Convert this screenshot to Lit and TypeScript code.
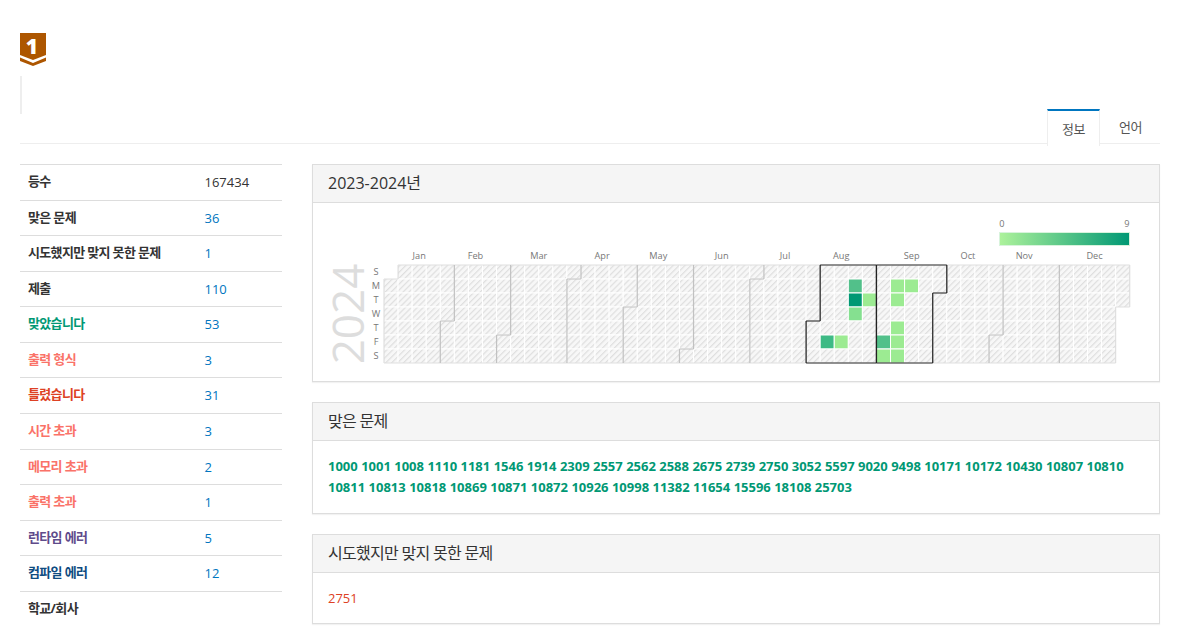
import { LitElement, html, css, svg } from "lit";
import { customElement } from "lit/decorators.js";

const stats: [string, string, string][] = [
  ["등수", "167434", ""],
  ["맞은 문제", "36", "link"],
  ["시도했지만 맞지 못한 문제", "1", "link"],
  ["제출", "110", "link"],
  ["맞았습니다", "53", "ac"],
  ["출력 형식", "3", "pe"],
  ["틀렸습니다", "31", "wa"],
  ["시간 초과", "3", "pe"],
  ["메모리 초과", "2", "pe"],
  ["출력 초과", "1", "pe"],
  ["런타임 에러", "5", "rte"],
  ["컴파일 에러", "12", "ce"],
  ["학교/회사", "", ""],
];

const solved = [
  1000, 1001, 1008, 1110, 1181, 1546, 1914, 2309, 2557, 2562, 2588, 2675, 2739, 2750, 3052, 5597,
  9020, 9498, 10171, 10172, 10430, 10807, 10810, 10811, 10813, 10818, 10869, 10871, 10872, 10926,
  10998, 11382, 11654, 15596, 18108, 25703,
];

const monthNames = ["Jan", "Feb", "Mar", "Apr", "May", "Jun", "Jul", "Aug", "Sep", "Oct", "Nov", "Dec"];
const monthDays = [31, 29, 31, 30, 31, 30, 31, 31, 30, 31, 30, 31];
const dayNames = ["S", "M", "T", "W", "T", "F", "S"];

const CW = 14.07;
const CH = 14;
const GX = 71;
const GY = 62;

// "col,row" -> colour, read off the reference
const active: Record<string, string> = {
  "33,1": "#52c08a",
  "33,2": "#009874",
  "34,2": "#9ceb92",
  "33,3": "#85e090",
  "31,5": "#3dba85",
  "32,5": "#9ceb92",
  "36,1": "#9ceb92",
  "37,1": "#9ceb92",
  "36,2": "#9ceb92",
  "36,4": "#9ceb92",
  "35,5": "#52c08a",
  "36,5": "#9ceb92",
  "35,6": "#9ceb92",
  "36,6": "#9ceb92",
};

function buildMonths() {
  const owner = new Map<string, number>();
  const cells: { col: number; row: number; month: number }[] = [];
  let idx = 1; // 2024-01-01 is a Monday
  monthDays.forEach((n, month) => {
    for (let d = 0; d < n; d++, idx++) {
      const col = Math.floor(idx / 7);
      const row = idx % 7;
      cells.push({ col, row, month });
      owner.set(`${col},${row}`, month);
    }
  });
  const outlines = monthNames.map((_, m) => {
    let d = "";
    cells
      .filter((c) => c.month === m)
      .forEach(({ col, row }) => {
        const x0 = GX + col * CW;
        const x1 = x0 + CW;
        const y0 = GY + row * CH;
        const y1 = y0 + CH;
        if (owner.get(`${col},${row - 1}`) !== m) d += `M${x0} ${y0}H${x1}`;
        if (owner.get(`${col},${row + 1}`) !== m) d += `M${x0} ${y1}H${x1}`;
        if (owner.get(`${col - 1},${row}`) !== m) d += `M${x0} ${y0}V${y1}`;
        if (owner.get(`${col + 1},${row}`) !== m) d += `M${x1} ${y0}V${y1}`;
      });
    return d;
  });
  const centers = monthNames.map((_, m) => {
    const cols = cells.filter((c) => c.month === m).map((c) => c.col);
    return GX + ((Math.min(...cols) + Math.max(...cols) + 1) / 2) * CW;
  });
  return { cells, outlines, centers };
}

const { cells, outlines, centers } = buildMonths();

@customElement("app-root")
export class AppRoot extends LitElement {
  static styles = css`
    :host {
      display: block;
      height: 633px;
      overflow: hidden;
      background: #fff;
      color: #333;
      font-family: "Open Sans", "Noto Sans CJK KR", sans-serif;
      font-size: 13px;
      line-height: 18.57px;
    }
    .page {
      width: 1140px;
      padding: 33px 18px 0 20px;
    }
    .badge {
      display: block;
    }
    .badge text {
      font: 800 21px "Open Sans", sans-serif;
      fill: #fff;
    }
    .quote {
      width: 0;
      height: 38px;
      margin-top: 10px;
      border-left: 2px solid #eee;
    }
    .tabs {
      display: flex;
      justify-content: flex-end;
      height: 34px;
      margin: -5px 0 20px;
      border-bottom: 1px solid #eee;
      letter-spacing: -0.5px;
    }
    .tab {
      width: 59px;
      height: 34px;
      text-align: center;
      line-height: 36px;
      color: #555;
    }
    .tab.on {
      width: 51px;
      height: 35px;
      margin-right: 1px;
      background: #fff;
      border: 1px solid #eee;
      border-top: 2px solid #0076c0;
      border-bottom: 0;
    }
    .cols {
      display: grid;
      grid-template-columns: 262px 848px;
      gap: 30px;
    }
    .row {
      display: grid;
      grid-template-columns: 176.5px 1fr;
      padding: 8px;
      border-top: 1px solid #ddd;
    }
    .row b {
      margin-top: -1px;
      font-weight: 700;
      letter-spacing: -0.65px;
    }
    .row.ac b {
      color: #009874;
    }
    .row.pe b {
      color: #fa7268;
    }
    .row.wa b {
      color: #dd4124;
    }
    .row.rte b {
      color: #5f4b8b;
    }
    .row.ce b {
      color: #0f4c81;
    }
    .row.link span,
    .row.ac span,
    .row.pe span,
    .row.wa span,
    .row.rte span,
    .row.ce span {
      color: #0076c0;
    }
    .panel {
      border: 1px solid #ddd;
      margin-bottom: 20px;
      box-shadow: 0 1px 1px rgba(0, 0, 0, 0.05);
    }
    .panel h3 {
      margin: 0;
      padding: 9px 15px;
      background: #f5f5f5;
      border-bottom: 1px solid #ddd;
      font-size: 16px;
      font-weight: 400;
      line-height: 19px;
      color: #333;
    }
    .panel h3.ko {
      letter-spacing: -0.7px;
    }
    .body {
      padding: 15px;
      line-height: 21px;
    }
    .solved a {
      color: #009874;
      font-weight: 700;
    }
    .failed {
      padding-bottom: 14px;
    }
    .failed a {
      color: #dd4124;
    }
    .chart {
      display: block;
    }
    .chart text {
      font-family: "Open Sans", sans-serif;
      font-size: 9.2px;
      fill: #777;
      text-anchor: middle;
    }
    .chart text.year {
      font-size: 44px;
      fill: #ddd;
    }
  `;

  private chart() {
    return html`<svg class="chart" width="846" height="178" viewBox="0 0 846 178">
      <defs>
        <pattern id="hatch" width="4.2" height="4.2" patternUnits="userSpaceOnUse" patternTransform="rotate(45)">
          <rect width="4.2" height="4.2" fill="#f7f7f7"></rect>
          <rect width="1.2" height="4.2" fill="#dfdfdf"></rect>
        </pattern>
        <linearGradient id="legend">
          <stop offset="0" stop-color="#adf29b"></stop>
          <stop offset="1" stop-color="#009874"></stop>
        </linearGradient>
      </defs>
      <text x="689" y="24">0</text>
      <text x="814" y="24">9</text>
      <rect x="686.5" y="29.5" width="130" height="13" fill="url(#legend)" stroke="#d8f3dc"></rect>
      ${monthNames.map((m, i) => svg`<text x=${centers[i]} y="56">${m}</text>`)}
      ${dayNames.map((d, i) => svg`<text x="63" y=${GY + i * CH + 10}>${d}</text>`)}
      <text class="year" transform="translate(51 111) rotate(-90)">2024</text>
      ${cells.map(
        ({ col, row }) => svg`<rect
          x=${GX + col * CW}
          y=${GY + row * CH}
          width=${CW}
          height=${CH}
          fill=${active[`${col},${row}`] ?? "url(#hatch)"}
          stroke="#fff"
        ></rect>`,
      )}
      ${outlines.map((d, m) =>
        m === 7 || m === 8
          ? ""
          : svg`<path d=${d} fill="none" stroke="#000" stroke-opacity="0.13" stroke-width="1.2"></path>`,
      )}
      <path d=${outlines[7]} fill="none" stroke="#222" stroke-width="1.2"></path>
      <path d=${outlines[8]} fill="none" stroke="#222" stroke-width="1.2"></path>
    </svg>`;
  }

  render() {
    return html`<div class="page">
      <svg class="badge" width="26" height="33" viewBox="0 0 26 33">
        <path d="M0 0H26V22L13 27L0 22Z" fill="#ad5600"></path>
        <path d="M0 24.500L13 30L26 24.500V28L13 33L0 28Z" fill="#ad5600"></path>
        <text x="12" y="20.500" text-anchor="middle">1</text>
      </svg>
      <div class="quote"></div>
      <div class="tabs">
        <div class="tab on">정보</div>
        <div class="tab">언어</div>
      </div>
      <div class="cols">
        <div>
          ${stats.map(
            ([label, value, kind]) =>
              html`<div class="row ${kind}"><b>${label}</b><span>${value}</span></div>`,
          )}
        </div>
        <div>
          <div class="panel">
            <h3>2023-2024년</h3>
            ${this.chart()}
          </div>
          <div class="panel">
            <h3 class="ko">맞은 문제</h3>
            <div class="body solved">${solved.map((n) => html`<a>${n}</a> `)}</div>
          </div>
          <div class="panel">
            <h3 class="ko">시도했지만 맞지 못한 문제</h3>
            <div class="body failed"><a>2751</a></div>
          </div>
        </div>
      </div>
    </div>`;
  }
}
